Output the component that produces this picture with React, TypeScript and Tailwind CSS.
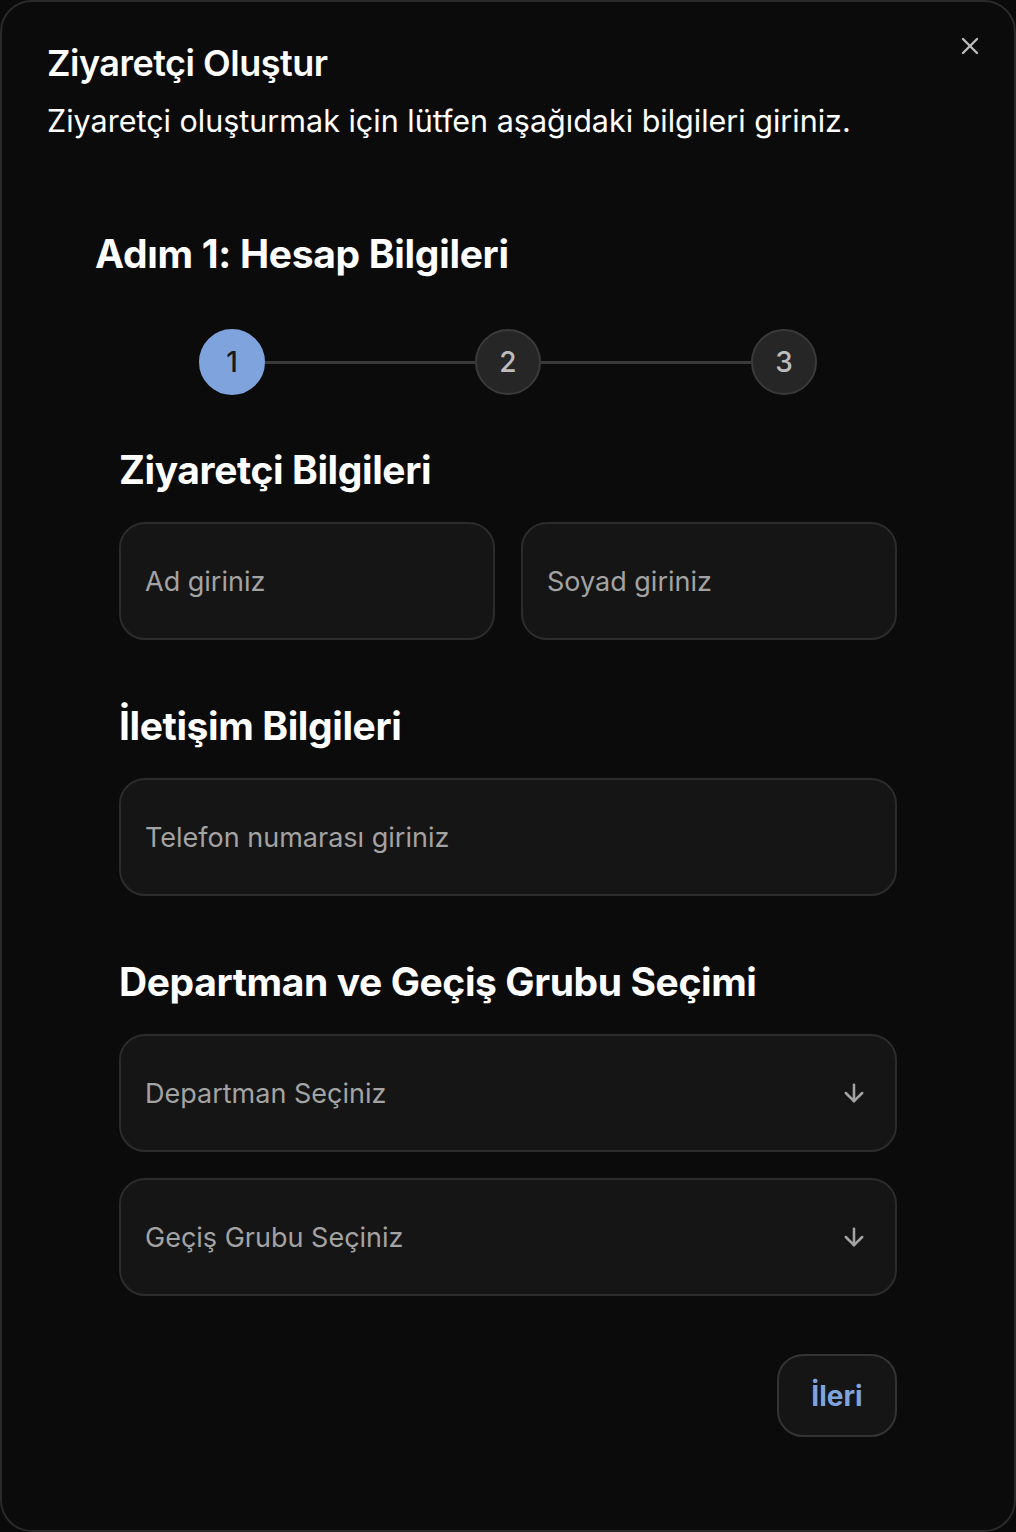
import { X, ArrowDown } from "lucide-react";

function Step({ n, active }: { n: number; active?: boolean }) {
  return (
    <div
      className={
        active
          ? "w-[66px] h-[66px] rounded-full bg-[#7fa3dc] border-2 border-[#7fa3dc] flex items-center justify-center text-[28px] font-medium text-[#1a1a1a]"
          : "w-[66px] h-[66px] rounded-full bg-[#262626] border-2 border-[#3a3a3a] flex items-center justify-center text-[28px] font-medium text-[#bdbdbd]"
      }
    >
      {n}
    </div>
  );
}

function Field({ placeholder, select }: { placeholder: string; select?: boolean }) {
  return (
    <div className="h-[118px] rounded-[26px] bg-[#151515] border-2 border-[#2c2c2c] flex items-center justify-between pl-[24px] pr-[27px]">
      <span className="pt-[3px] text-[27px] text-[#a3a3a3]">{placeholder}</span>
      {select && <ArrowDown size={28} strokeWidth={2.2} className="text-[#a3a3a3]" />}
    </div>
  );
}

export default function App() {
  return (
    <div className="min-h-[1532px] bg-[#0a0a0a]" style={{ fontFamily: "Inter, 'Noto Sans', sans-serif" }}>
      <div className="relative h-[1532px] rounded-[32px] border-2 border-[#2a2a2a] bg-[#0b0b0b] text-white">
        <button className="absolute right-[30px] top-[30px] text-[#bdbdbd]">
          <X size={28} strokeWidth={2} />
        </button>
        <div className="px-[45px] pt-[39px]">
          <h1 className="text-[36px] font-semibold leading-[44px] tracking-[-0.5px]">Ziyaretçi Oluştur</h1>
          <p className="mt-[17px] text-[30.5px] leading-[38px]">
            Ziyaretçi oluşturmak için lütfen aşağıdaki bilgileri giriniz.
          </p>
        </div>

        <div className="px-[93px] mt-[90px]">
          <h2 className="text-[39px] font-bold leading-[48px] tracking-[-0.3px]">Adım 1: Hesap Bilgileri</h2>
        </div>

        <div className="mt-[51px] flex items-center justify-center">
          <Step n={1} active />
          <div className="w-[210px] h-[3px] bg-[#3a3a3a]" />
          <Step n={2} />
          <div className="w-[210px] h-[3px] bg-[#3a3a3a]" />
          <Step n={3} />
        </div>

        <div className="px-[117px] mt-[51px]">
          <h3 className="text-[39px] font-bold leading-[48px] tracking-[-0.4px]">Ziyaretçi Bilgileri</h3>
          <div className="mt-[28px] grid grid-cols-2 gap-[26px]">
            <Field placeholder="Ad giriniz" />
            <Field placeholder="Soyad giriniz" />
          </div>

          <h3 className="mt-[62px] text-[39px] font-bold leading-[48px] tracking-[-0.4px]">İletişim Bilgileri</h3>
          <div className="mt-[28px]">
            <Field placeholder="Telefon numarası giriniz" />
          </div>

          <h3 className="mt-[62px] text-[39px] font-bold leading-[48px] tracking-[-0.4px]">
            Departman ve Geçiş Grubu Seçimi
          </h3>
          <div className="mt-[28px] flex flex-col gap-[26px]">
            <Field placeholder="Departman Seçiniz" select />
            <Field placeholder="Geçiş Grubu Seçiniz" select />
          </div>

          <div className="mt-[58px] flex justify-end">
            <button className="w-[120px] h-[83px] rounded-[26px] bg-[#151515] border-2 border-[#333333] text-[28px] font-bold text-[#7fa3dc]">
              İleri
            </button>
          </div>
        </div>
      </div>
    </div>
  );
}
